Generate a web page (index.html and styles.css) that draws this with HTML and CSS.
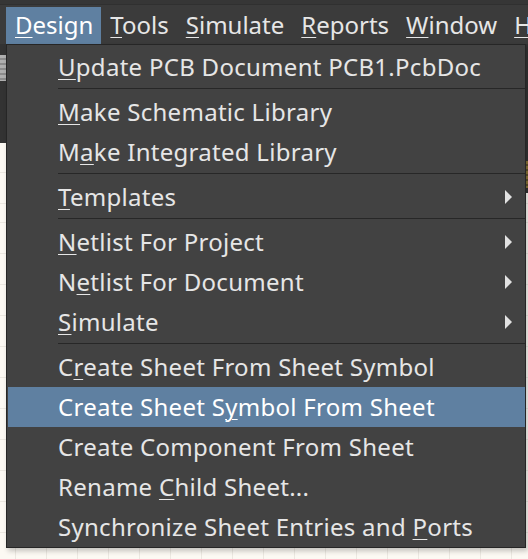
FILE: index.html
```html
<!DOCTYPE html>
<html>
<head>
<meta charset="utf-8">
<link rel="stylesheet" href="styles.css">
</head>
<body>
<div class="app">
  <div class="menubar">
    <span class="mb-item active"><u>D</u>esign</span>
    <span class="mb-item"><u>T</u>ools</span>
    <span class="mb-item"><u>S</u>imulate</span>
    <span class="mb-item"><u>R</u>eports</span>
    <span class="mb-item"><u>W</u>indow</span>
    <span class="mb-item"><u>H</u>elp</span>
  </div>
  <div class="workspace">
    <div class="toolbar">
      <div class="tb-left">
        <div class="tb-icon"></div>
      </div>
      <div class="tb-right"><div class="tb-gold"></div></div>
    </div>
    <div class="canvas"></div>
  </div>

  <div class="dropdown">
    <div class="item"><span><u>U</u>pdate PCB Document PCB1.PcbDoc</span></div>
    <div class="sep"></div>
    <div class="item"><span><u>M</u>ake Schematic Library</span></div>
    <div class="item"><span>M<u>a</u>ke Integrated Library</span></div>
    <div class="sep"></div>
    <div class="item"><span><u>T</u>emplates</span><i class="arrow"></i></div>
    <div class="sep"></div>
    <div class="item"><span><u>N</u>etlist For Project</span><i class="arrow"></i></div>
    <div class="item"><span>N<u>e</u>tlist For Document</span><i class="arrow"></i></div>
    <div class="item"><span><u>S</u>imulate</span><i class="arrow"></i></div>
    <div class="sep"></div>
    <div class="item"><span>C<u>r</u>eate Sheet From Sheet Symbol</span></div>
    <div class="item hl"><span>Create Sheet S<u>y</u>mbol From Sheet</span></div>
    <div class="item"><span>Create Component From Sheet</span></div>
    <div class="item"><span>Rename <u>C</u>hild Sheet...</span></div>
    <div class="item"><span>Synchronize Sheet Entries and <u>P</u>orts</span></div>
  </div>
</div>
</body>
</html>
```

FILE: styles.css
```css
html, body {
  margin: 0;
  padding: 0;
}
body {
  width: 528px;
  height: 559px;
  overflow: hidden;
  font-family: "Noto Sans", "Open Sans", sans-serif;
  font-size: 24px;
  background: #fcf9f3;
}
u {
  text-decoration: underline;
  text-decoration-thickness: 1px;
  text-underline-offset: 3px;
}
.app {
  position: relative;
  width: 528px;
  height: 559px;
  display: flex;
  flex-direction: column;
}
.menubar {
  height: 37px;
  padding-top: 7px;
  padding-left: 6px;
  background: #3b3b3b;
  box-shadow: inset 0 4px 0 #363636, inset 0 5px 0 #303030;
  display: flex;
  align-items: stretch;
  color: #e6e6e6;
  white-space: nowrap;
  overflow: hidden;
}
.mb-item {
  padding: 0 8px 0 9px;
  line-height: 36px;
}
.mb-item.active {
  background: #5f80a1;
  color: #ffffff;
}
.workspace {
  flex: 1;
  display: flex;
  flex-direction: column;
  background-color: #fcf9f3;
  background-image:
    repeating-linear-gradient(90deg, transparent 0 15px, #ece8e1 15px 16px, transparent 16px 31px),
    repeating-linear-gradient(180deg, transparent 0 16px, #ece8e1 16px 17px, transparent 17px 31px);
  background-position: 0 0, 0 162px;
}
.toolbar {
  display: flex;
  justify-content: space-between;
  align-items: flex-start;
}
.tb-left {
  width: 6px;
  height: 99px;
  background: #333333;
  padding-top: 11px;
  box-sizing: border-box;
  border-bottom: 0;
}
.tb-icon {
  height: 26px;
  background: repeating-linear-gradient(180deg, #b0b0b0 0 3px, #8c8c8c 3px 5px);
}
.tb-right {
  width: 4px;
  height: 149px;
  background: #333333;
  padding-top: 117px;
  box-sizing: border-box;
}
.tb-gold {
  height: 27px;
  background: repeating-linear-gradient(180deg, #8a7436 0 3px, #5b4e2a 3px 5px);
}
.canvas {
  flex: 1;
}

.dropdown {
  position: absolute;
  left: 6px;
  top: 44px;
  width: 517px;
  border: 1px solid #262626;
  background: #424242;
  padding: 2px 0 0 1px;
  box-shadow: 2px 3px 5px rgba(0, 0, 0, 0.22);
  color: #e6e6e6;
}
.item {
  height: 40px;
  line-height: 40px;
  padding-left: 50px;
  display: flex;
  justify-content: space-between;
  align-items: center;
  white-space: nowrap;
  letter-spacing: 0.28px;
}
.item.hl {
  background: #5f80a1;
  color: #ffffff;
}
.sep {
  height: 1px;
  margin: 1px 0 3px 50px;
  background: #272727;
}
.arrow {
  width: 0;
  height: 0;
  border-left: 7px solid #e2e2e2;
  border-top: 7px solid transparent;
  border-bottom: 7px solid transparent;
  margin-right: 13px;
}
```
